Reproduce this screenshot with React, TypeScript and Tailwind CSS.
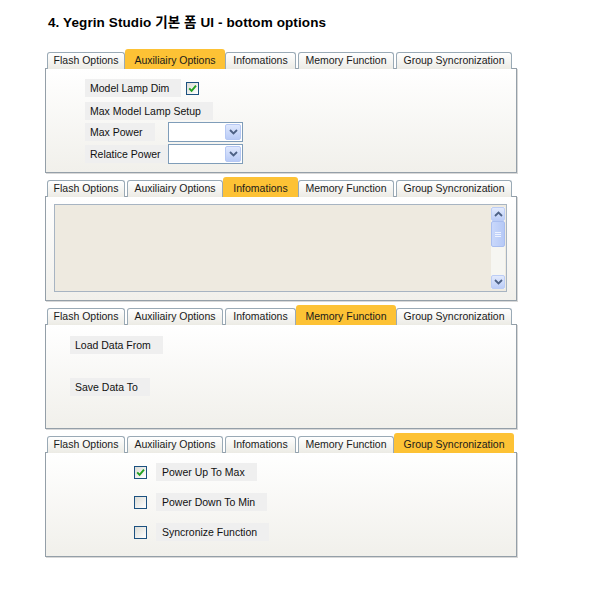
import React from "react";

const TABS = [
  { name: "Flash Options", w: "w-[78px]", wa: "w-[82px]" },
  { name: "Auxiliairy Options", w: "w-[96px]", wa: "w-[100px]" },
  { name: "Infomations", w: "w-[71px]", wa: "w-[75px]" },
  { name: "Memory Function", w: "w-[96px]", wa: "w-[100px]" },
  { name: "Group Syncronization", w: "w-[116px]", wa: "w-[120px]" },
];

const font = "font-['Liberation_Sans',Arial,sans-serif]";

function TabStrip({ active }: { active: number }) {
  return (
    <div className="relative z-10 -mb-[1px] flex h-[20px] items-end gap-[2px] pl-[2px]">
      {TABS.map((t, i) =>
        i === active ? (
          <div
            key={t.name}
            className={`${t.wa} -mx-[2px] flex h-[20px] items-center justify-center rounded-t-[3px] bg-[#fdc235] pt-[3px] text-[10.5px] whitespace-nowrap text-[#1a1a1a]`}
          >
            {t.name}
          </div>
        ) : (
          <div
            key={t.name}
            className={`${t.w} flex h-[17px] items-center justify-center rounded-t-[3px] border border-b-0 border-[#9aaab6] bg-linear-to-b from-white to-[#ecebe5] text-[10.5px] whitespace-nowrap text-[#1a1a1a]`}
          >
            {t.name}
          </div>
        )
      )}
    </div>
  );
}

function Panel({ children }: { children: React.ReactNode }) {
  return (
    <div className="h-[105px] border border-[#949fa8] bg-linear-to-b from-white to-[#f1f0eb] shadow-[1px_1px_0_#d8d8d8]">
      {children}
    </div>
  );
}

function Label({ text, className = "" }: { text: string; className?: string }) {
  return (
    <div
      className={`h-[18px] shrink-0 whitespace-nowrap bg-[#efefef] pl-[5px] pr-[12px] text-[10.5px] leading-[18px] text-[#111] ${className}`}
    >
      {text}
    </div>
  );
}

function Check({ on }: { on?: boolean }) {
  return (
    <span className="flex h-[13px] w-[13px] shrink-0 items-center justify-center border border-[#1c5180] bg-linear-to-br from-[#dcdcd6] to-white">
      {on && (
        <svg viewBox="0 0 9 9" className="h-[9px] w-[9px]">
          <path d="M1.2 4.3 L3.6 6.8 L8 1.6" stroke="#21a121" strokeWidth="1.9" fill="none" />
        </svg>
      )}
    </span>
  );
}

function Chevron({ up }: { up?: boolean }) {
  return (
    <svg viewBox="0 0 9 6" className="h-[6px] w-[9px]">
      <path
        d={up ? "M1 5 L4.5 1.5 L8 5" : "M1 1 L4.5 4.5 L8 1"}
        stroke="#4d6185"
        strokeWidth="1.8"
        fill="none"
      />
    </svg>
  );
}

function Select() {
  return (
    <div className="flex h-[20px] w-[75px] shrink-0 items-stretch border border-[#7f9db9] bg-white p-[1px]">
      <div className="flex-1" />
      <div className="flex w-[16px] items-center justify-center rounded-[2px] border border-[#b6c8f4] bg-linear-to-b from-[#dfe8fd] to-[#b9cbf6]">
        <Chevron />
      </div>
    </div>
  );
}

function AuxPanel() {
  return (
    <div className="flex flex-col pl-[39px] pt-[10px]">
      <div className="flex items-center">
        <Label text="Model Lamp Dim" />
        <span className="ml-[5px]">
          <Check on />
        </span>
      </div>
      <div className="mt-[5px] flex">
        <Label text="Max Model Lamp Setup" />
      </div>
      <div className="mt-[2px] flex items-center">
        <div className="flex w-[83px] shrink-0">
          <Label text="Max Power" />
        </div>
        <Select />
      </div>
      <div className="mt-[2px] flex items-center">
        <div className="flex w-[83px] shrink-0">
          <Label text="Relatice Power" />
        </div>
        <Select />
      </div>
    </div>
  );
}

function InfoPanel() {
  return (
    <div className="pl-[8px] pr-[9px] pt-[7px]">
      <div className="flex h-[88px] justify-end border border-[#a7b4c2] bg-[#eeeae0] py-[2px] pr-[1px]">
        <div className="flex w-[14px] flex-col bg-[#f6f6f2]">
          <div className="flex h-[14px] items-center justify-center rounded-[2px] border border-[#bccdf5] bg-linear-to-b from-[#e2eafd] to-[#bccdf7]">
            <Chevron up />
          </div>
          <div className="flex h-[26px] flex-col items-center justify-center gap-[1px] rounded-[2px] border border-[#a9bef0] bg-linear-to-r from-[#c9d8fb] to-[#b6c9f6]">
            <span className="h-px w-[6px] bg-[#eef3ff]" />
            <span className="h-px w-[6px] bg-[#eef3ff]" />
            <span className="h-px w-[6px] bg-[#eef3ff]" />
          </div>
          <div className="flex-1" />
          <div className="flex h-[14px] items-center justify-center rounded-[2px] border border-[#bccdf5] bg-linear-to-b from-[#e2eafd] to-[#bccdf7]">
            <Chevron />
          </div>
        </div>
      </div>
    </div>
  );
}

function MemoryPanel() {
  return (
    <div className="flex flex-col items-start pl-[24px] pt-[11px]">
      <Label text="Load Data From" />
      <Label text="Save Data To" className="mt-[24px]" />
    </div>
  );
}

function GroupPanel() {
  const rows = [
    { text: "Power Up To Max", on: true },
    { text: "Power Down To Min", on: false },
    { text: "Syncronize Function", on: false },
  ];
  return (
    <div className="flex flex-col gap-[12px] pl-[88px] pt-[10px]">
      {rows.map((r) => (
        <div key={r.text} className="flex items-center">
          <Check on={r.on} />
          <Label text={r.text} className="ml-[9px] pl-[6px]" />
        </div>
      ))}
    </div>
  );
}

export default function App() {
  return (
    <div className={`min-h-[600px] w-[600px] bg-white pl-[45px] pt-[13px] ${font}`}>
      <h1 className="ml-[3px] h-[20px] font-['Liberation_Sans','Noto_Sans_CJK_KR',sans-serif] text-[13.5px] font-bold leading-[20px] tracking-[0.1px] text-black">
        4. Yegrin Studio 기본 폼 UI - bottom options
      </h1>
      <div className="mt-[16px] flex w-[472px] flex-col gap-[4px]">
        <div>
          <TabStrip active={1} />
          <Panel>
            <AuxPanel />
          </Panel>
        </div>
        <div>
          <TabStrip active={2} />
          <Panel>
            <InfoPanel />
          </Panel>
        </div>
        <div>
          <TabStrip active={3} />
          <Panel>
            <MemoryPanel />
          </Panel>
        </div>
        <div>
          <TabStrip active={4} />
          <Panel>
            <GroupPanel />
          </Panel>
        </div>
      </div>
    </div>
  );
}
